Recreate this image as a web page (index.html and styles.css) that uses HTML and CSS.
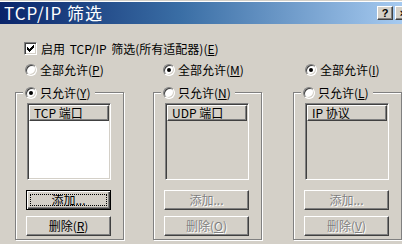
FILE: index.html
```html
<!DOCTYPE html>
<html lang="zh-CN">
<head>
<meta charset="utf-8">
<title>TCP/IP 筛选</title>
<link rel="stylesheet" href="styles.css">
</head>
<body>
<div class="window">
  <div class="titlebar">
    <span class="title">TCP/IP 筛选</span>
    <div class="tbuttons">
      <span class="tbtn">?</span>
      <span class="tbtn">×</span>
    </div>
  </div>
  <div class="content">
    <div class="check-row">
      <span class="checkbox"><svg width="7" height="7" viewBox="0 0 7 7"><path d="M0 2h1v1h1v1h1v-1h1v-1h1v-1h1v-1h1v3h-1v1h-1v1h-1v1h-1v1h-1v-1h-1v-1h-1z" fill="#000"/></svg></span>
      <span class="label">启用 TCP/IP 筛选(所有适配器)(<u>E</u>)</span>
    </div>
    <div class="cols radio-row">
      <div class="radio-item"><span class="radio"></span><span>全部允许(<u>P</u>)</span></div>
      <div class="radio-item"><span class="radio checked"></span><span>全部允许(<u>M</u>)</span></div>
      <div class="radio-item shift"><span class="radio checked"></span><span>全部允许(<u>I</u>)</span></div>
    </div>
    <div class="cols groups">
      <fieldset class="group">
        <legend class="radio-item"><span class="radio checked"></span><span>只允许(<u>Y</u>)</span></legend>
        <div class="listbox"><div class="lheader">TCP 端口</div><div class="lbody white"></div></div>
        <div class="btn focus"><span class="focus-rect">添加...</span></div>
        <div class="btn">删除(<u>R</u>)</div>
      </fieldset>
      <fieldset class="group">
        <legend class="radio-item"><span class="radio"></span><span>只允许(<u>N</u>)</span></legend>
        <div class="listbox"><div class="lheader">UDP 端口</div><div class="lbody"></div></div>
        <div class="btn disabled">添加...</div>
        <div class="btn disabled">删除(<u>O</u>)</div>
      </fieldset>
      <fieldset class="group">
        <legend class="radio-item"><span class="radio"></span><span>只允许(<u>L</u>)</span></legend>
        <div class="listbox"><div class="lheader">IP 协议</div><div class="lbody"></div></div>
        <div class="btn disabled">添加...</div>
        <div class="btn disabled">删除(<u>V</u>)</div>
      </fieldset>
    </div>
  </div>
</div>
</body>
</html>
```
FILE: styles.css
```css
html, body {
  margin: 0;
  padding: 0;
}
body {
  width: 402px;
  height: 244px;
  overflow: hidden;
  background: #d4d0c8;
  font-family: "Noto Sans CJK SC", sans-serif;
  font-size: 12px;
  color: #000;
}
.window {
  border-top: 1px solid #d4d0c8;
  box-shadow: inset 0 1px 0 #ffffff;
  padding-top: 1px;
}
.titlebar {
  height: 22px;
  display: flex;
  align-items: center;
  background: linear-gradient(to right, #0a246a 0%, #3a6ea5 45%, #a6caf0 100%);
}
.title {
  color: #fff;
  font-size: 17px;
  line-height: 20px;
  padding-left: 4px;
  letter-spacing: 1px;
}
.tbuttons {
  margin-left: auto;
  margin-right: -9px;
  display: flex;
  gap: 2px;
}
.tbtn {
  width: 16px;
  height: 14px;
  box-sizing: border-box;
  background: #d4d0c8;
  border: 1px solid;
  border-color: #fff #404040 #404040 #fff;
  box-shadow: inset -1px -1px #808080;
  font-family: "Liberation Sans", sans-serif;
  font-weight: bold;
  font-size: 11px;
  line-height: 12px;
  text-align: center;
  color: #000;
}
.content {
  padding-top: 18px;
}
.check-row {
  display: flex;
  align-items: center;
  height: 13px;
  padding-left: 24px;
  gap: 4px;
}
.label {
  word-spacing: 2px;
}
.checkbox {
  width: 13px;
  height: 13px;
  box-sizing: border-box;
  background: #fff;
  border: 1px solid;
  border-color: #808080 #fff #fff #808080;
  box-shadow: inset 1px 1px #404040, inset -1px -1px #d4d0c8;
  display: flex;
  align-items: center;
  justify-content: center;
}
.checkbox svg {
  display: block;
}
.cols {
  display: grid;
  grid-template-columns: 138px 140px 109px;
  padding-left: 15px;
}
.radio-row {
  margin-top: 8px;
  height: 13px;
}
.radio-item {
  display: flex;
  align-items: center;
  gap: 3px;
  height: 13px;
  padding-left: 10px;
  white-space: nowrap;
}
.radio-item.shift {
  padding-left: 12px;
}
.radio {
  width: 12px;
  height: 12px;
  box-sizing: border-box;
  border-radius: 50%;
  background: #fff;
  border: 1px solid;
  border-color: #808080 #fff #fff #808080;
  box-shadow: inset 1px 1px #404040, inset -1px -1px #d4d0c8;
  display: flex;
  align-items: center;
  justify-content: center;
  flex: none;
}
.radio.checked::after {
  content: "";
  width: 4px;
  height: 4px;
  border-radius: 50%;
  background: #000;
}
.groups {
  margin-top: 10px;
}
.group {
  margin: 0;
  padding: 0 11px 3px 11px;
  width: 109px;
  min-width: 0;
  box-sizing: border-box;
  border: 1px solid #808080;
  box-shadow: inset 1px 1px #fff, 1px 1px #fff;
}
.group legend.radio-item {
  padding: 0 4px 0 2px;
  margin-left: -4px;
  background: #d4d0c8;
}
.listbox {
  margin-top: 4px;
  width: 84px;
  height: 77px;
  box-sizing: border-box;
  border: 1px solid;
  border-color: #808080 #fff #fff #808080;
  box-shadow: inset 1px 1px #404040, inset -1px -1px #d4d0c8;
  padding: 1px;
  display: flex;
  flex-direction: column;
}
.lheader {
  height: 16px;
  box-sizing: border-box;
  border: 1px solid;
  border-color: #fff #404040 #404040 #fff;
  box-shadow: inset -1px -1px #808080;
  background: #d4d0c8;
  padding-left: 4px;
  line-height: 13px;
  white-space: nowrap;
  flex: none;
}
.lbody {
  flex: 1;
  background: #d4d0c8;
}
.lbody.white {
  background: #fff;
}
.btn {
  margin-top: 10px;
  margin-left: -1px;
  width: 85px;
  height: 20px;
  box-sizing: border-box;
  background: #d4d0c8;
  border: 1px solid;
  border-color: #fff #404040 #404040 #fff;
  box-shadow: inset -1px -1px #808080;
  text-align: center;
  line-height: 17px;
  white-space: nowrap;
}
.btn + .btn {
  margin-top: 6px;
}
.btn.focus {
  border-color: #000;
  box-shadow: inset 1px 1px #fff, inset -1px -1px #404040, inset -2px -2px #808080;
  padding: 3px;
}
.focus-rect {
  display: block;
  height: 12px;
  border: 1px dotted #000;
  box-sizing: border-box;
  line-height: 10px;
}
.btn.disabled {
  color: #808080;
  text-shadow: 1px 1px 0 #fff;
}
```
